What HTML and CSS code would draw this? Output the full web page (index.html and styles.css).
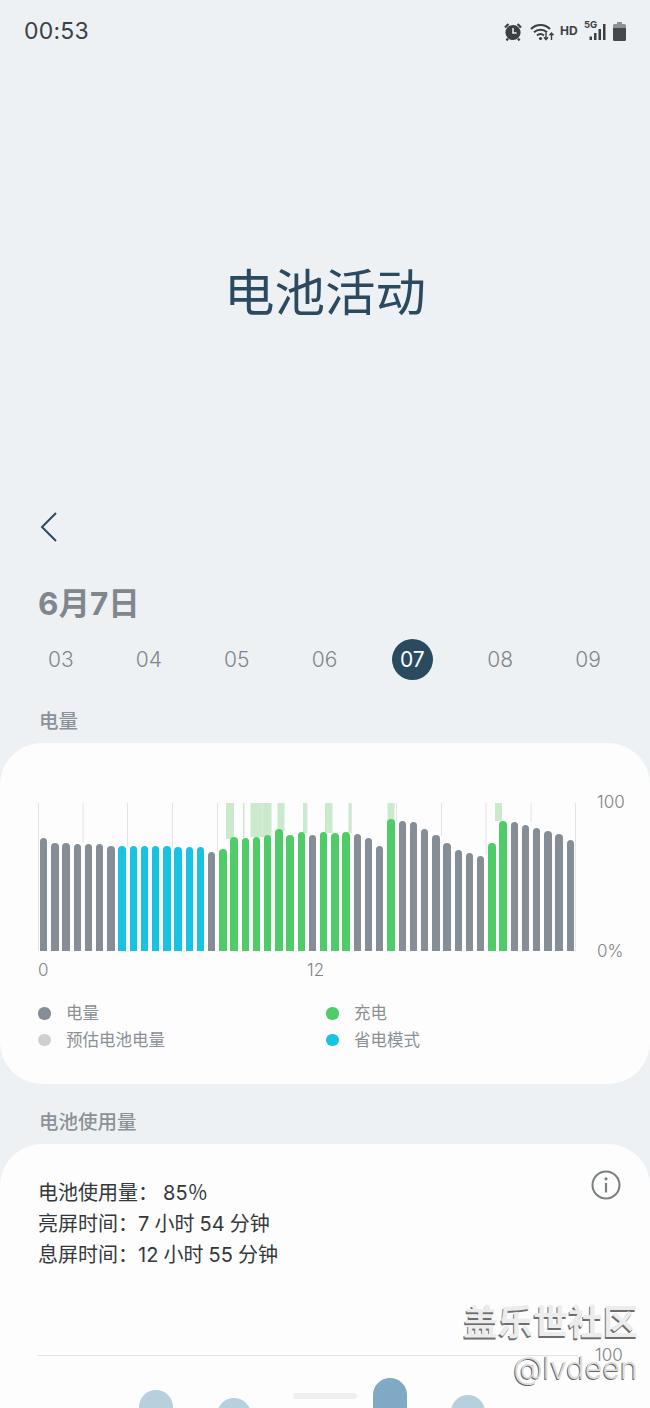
FILE: index.html
```html
<!DOCTYPE html>
<html lang="zh">
<head>
<meta charset="utf-8">
<title>电池活动</title>
<link rel="stylesheet" href="styles.css">
</head>
<body>
<div class="screen">
  <header class="status">
    <span class="time">00:53</span>
    <div class="status-icons">
      <svg class="ic-alarm" width="20" height="19" viewBox="0 0 20 19"><circle cx="10" cy="10.500" r="7.600" fill="#3a3f43"/><path d="M10 6v5h3.600" fill="none" stroke="#eef1f4" stroke-width="1.500"/><path d="M2 5.500 5.500 2M18 5.500 14.500 2M5 16.500 3.500 18.500M15 16.500 16.500 18.500" stroke="#3a3f43" stroke-width="2.200" fill="none"/></svg>
      <svg class="ic-wifi" width="24" height="19" viewBox="0 0 24 19"><g fill="none" stroke="#3a3f43" stroke-width="2"><path d="M1 7C6 1.500 15 1.500 20 7"/><path d="M4 10.300c3.600-3.400 9.400-3.400 13 0"/><path d="M7 13.500c2.200-1.800 4.800-1.800 7 0"/></g><circle cx="10.500" cy="16.500" r="1.600" fill="#3a3f43"/><path d="M16 10.500v7M14 15.300l2 2.300 2-2.300M21.500 18v-7M19.500 13.300l2-2.300 2 2.300" fill="none" stroke="#3a3f43" stroke-width="1.400"/></svg>
      <span class="hd">HD</span>
      <div class="net">
        <span class="fiveg">5G</span>
        <svg class="ic-signal" width="17" height="16" viewBox="0 0 17 16"><path d="M0.500 12.500h2.500V16H0.500zM5 9h2.500v7H5zM9.500 5H12v11H9.500zM14 0h2.500v16H14z" fill="#3a3f43"/></svg>
      </div>
      <svg class="ic-battery" width="13" height="19" viewBox="0 0 13 19"><path d="M4 0h5v2h2.500A1.500 1.500 0 0 1 13 3.500V6H0V3.500A1.500 1.500 0 0 1 1.500 2H4z" fill="#8d9195"/><path d="M0 6h13V17.500A1.500 1.500 0 0 1 11.500 19h-10A1.500 1.500 0 0 1 0 17.500z" fill="#44494d"/></svg>
    </div>
  </header>

  <section class="hero"><h1 class="title">电池活动</h1></section>

  <nav class="back">
    <svg width="18" height="30" viewBox="0 0 18 30"><path d="M16 1 2 15l14 14" fill="none" stroke="#2a4a60" stroke-width="2"/></svg>
  </nav>

  <h2 class="date-title">6月7日</h2>
  <div class="dates">
    <span class="date">03</span>
    <span class="date">04</span>
    <span class="date">05</span>
    <span class="date">06</span>
    <span class="date"><b class="date-on">07</b></span>
    <span class="date">08</span>
    <span class="date">09</span>
  </div>

  <h3 class="section first">电量</h3>
  <section class="card level-card">
    <div class="chart">
      <div class="plot">
        <svg class="plot-bg" width="540" height="148" viewBox="38 803 540 148">
          <g class="bands">
            <rect x="226" y="803" width="8" height="36"/>
            <rect x="243" y="803" width="1.500" height="34"/>
            <rect x="250.500" y="803" width="21" height="34"/>
            <rect x="277.500" y="803" width="7" height="28"/>
            <rect x="303" y="803" width="4" height="30"/>
            <rect x="325" y="803" width="7.500" height="30"/>
            <rect x="348.500" y="803" width="3.500" height="30"/>
            <rect x="387.500" y="803" width="7" height="18"/>
            <rect x="495" y="803" width="7" height="18"/>
          </g>
          <g class="grid">
            <path d="M38.500 803V951M83 803V843M127.500 803V846M172.500 803V847M217.500 803V852M262.500 803V835M307 803V835M351.500 803V832M396.500 803V821M441.500 803V836M486 803V855M531 803V822M575.500 803V951"/>
          </g>
        </svg>
        <div class="bars">
          <i class="bar g" style="height:113px"></i><i class="bar g" style="height:108px"></i><i class="bar g" style="height:108px"></i><i class="bar g" style="height:107px"></i>
          <i class="bar g" style="height:107px"></i><i class="bar g" style="height:107px"></i><i class="bar g" style="height:105px"></i><i class="bar b" style="height:105px"></i>
          <i class="bar b" style="height:105px"></i><i class="bar b" style="height:105px"></i><i class="bar b" style="height:105px"></i><i class="bar b" style="height:105px"></i>
          <i class="bar b" style="height:104px"></i><i class="bar b" style="height:104px"></i><i class="bar b" style="height:104px"></i><i class="bar g" style="height:99px"></i>
          <i class="bar c" style="height:102px"></i><i class="bar c" style="height:114px"></i><i class="bar c" style="height:113px"></i><i class="bar c" style="height:114px"></i>
          <i class="bar c" style="height:116px"></i><i class="bar c" style="height:122px"></i><i class="bar c" style="height:116px"></i><i class="bar c" style="height:119px"></i>
          <i class="bar g" style="height:116px"></i><i class="bar c" style="height:119px"></i><i class="bar c" style="height:118px"></i><i class="bar c" style="height:119px"></i>
          <i class="bar g" style="height:117px"></i><i class="bar g" style="height:113px"></i><i class="bar g" style="height:105px"></i><i class="bar c" style="height:132px"></i>
          <i class="bar g" style="height:130px"></i><i class="bar g" style="height:129px"></i><i class="bar g" style="height:122px"></i><i class="bar g" style="height:116px"></i>
          <i class="bar g" style="height:108px"></i><i class="bar g" style="height:101px"></i><i class="bar g" style="height:98px"></i><i class="bar g" style="height:95px"></i>
          <i class="bar c" style="height:108px"></i><i class="bar c" style="height:130px"></i><i class="bar g" style="height:129px"></i><i class="bar g" style="height:126px"></i>
          <i class="bar g" style="height:123px"></i><i class="bar g" style="height:120px"></i><i class="bar g" style="height:117px"></i><i class="bar g" style="height:111px"></i>
        </div>
      </div>
      <div class="y-axis"><span>100</span><span>0%</span></div>
    </div>
    <div class="x-axis"><span class="x-half">0</span><span>12</span></div>
    <ul class="legend">
      <li class="legend-item"><i class="dot g"></i>电量</li>
      <li class="legend-item"><i class="dot c"></i>充电</li>
      <li class="legend-item"><i class="dot e"></i>预估电池电量</li>
      <li class="legend-item"><i class="dot b"></i>省电模式</li>
    </ul>
  </section>

  <h3 class="section second">电池使用量</h3>
  <section class="card usage-card">
    <div class="usage-head">
      <div class="usage-text">
        <p class="usage-line">电池使用量： 85％</p>
        <p class="usage-line">亮屏时间：7 小时 54 分钟</p>
        <p class="usage-line">息屏时间：12 小时 55 分钟</p>
      </div>
      <svg class="info" width="30" height="30" viewBox="0 0 30 30"><circle cx="15" cy="15" r="13.500" fill="none" stroke="#7a7f82" stroke-width="2"/><circle cx="15" cy="8.800" r="1.600" fill="#7a7f82"/><path d="M15 13v9.500" stroke="#7a7f82" stroke-width="2.200"/></svg>
    </div>
    <div class="usage-chart">
      <div class="usage-axis"><span class="usage-rule"></span><span class="usage-max">100</span></div>
      <div class="usage-bars">
        <i class="ubar" style="height:67px"></i>
        <i class="ubar" style="height:59px"></i>
        <i class="ubar" style="height:0"></i>
        <i class="ubar peak" style="height:79px"></i>
        <i class="ubar" style="height:62px"></i>
      </div>
    </div>
  </section>

  <div class="pill"></div>
  <div class="watermark">
    <div class="wm-cn">盖乐世社区</div>
    <div class="wm-en">@lvdeen</div>
  </div>
</div>
</body>
</html>
```
FILE: styles.css
```css
* { box-sizing: border-box; }
html, body { margin: 0; padding: 0; }
body {
  background: #eef1f4;
  font-family: Inter, "Noto Sans CJK SC", sans-serif;
}
h1, h2, h3, p, ul { margin: 0; padding: 0; }
i { display: block; }

.screen {
  position: relative;
  width: 650px;
  height: 1408px;
  overflow: hidden;
  background: #eef1f4;
}

/* status bar */
.status {
  height: 62px;
  padding: 0 24px 0 24px;
  display: flex;
  align-items: center;
  justify-content: space-between;
}
.time { font-size: 23px; line-height: 28px; color: #3c4146; letter-spacing: .2px; }
.status-icons { display: flex; align-items: center; }
.ic-alarm { margin-right: 7px; }
.ic-wifi { margin-right: 6px; }
.hd { font-size: 12px; line-height: 14px; font-weight: 700; color: #3c4146; width: 24px; }
.net { width: 24px; height: 20px; position: relative; margin-right: 5px; }
.fiveg { position: absolute; left: 0; top: -1px; font-size: 9.500px; line-height: 10px; font-weight: 700; color: #3c4146; }
.ic-signal { position: absolute; left: 5px; top: 3px; }

/* hero */
.hero { height: 450px; padding-top: 200px; text-align: center; }
.title {
  font-size: 50.500px;
  line-height: 62px;
  font-weight: 400;
  color: #2b4a60;
}

.back { height: 30px; padding-left: 40px; }
.back svg { display: block; }

.date-title {
  margin-top: 40px;
  padding-left: 38px;
  font-size: 31.500px;
  line-height: 44px;
  font-weight: 700;
  color: #7f878c;
}
.dates {
  margin-top: 12px;
  padding: 0 18px 0 17px;
  display: flex;
}
.date {
  flex: 1;
  height: 42px;
  display: flex;
  align-items: center;
  justify-content: center;
  font-size: 21px;
  font-weight: 300;
  color: #80878c;
}
.date-on {
  width: 41px;
  height: 41px;
  border-radius: 50%;
  background: #2a4a60;
  color: #fff;
  font-weight: 400;
  display: flex;
  align-items: center;
  justify-content: center;
}

.section {
  padding-left: 39px;
  font-size: 19.500px;
  line-height: 28px;
  font-weight: 500;
  color: #8b9298;
}
.section.first { margin-top: 27px; }
.section.second { margin-top: 24px; }

.card {
  background: #fdfdfd;
  border-radius: 42px;
}
.level-card {
  margin-top: 8px;
  height: 341px;
  padding: 60px 0 0 38px;
}

.chart { display: flex; }
.plot { position: relative; width: 538px; height: 148px; }
.plot-bg { position: absolute; left: 0; top: 0; }
.bands rect { fill: #c9ebcc; }
.grid path { stroke: #e3e4e5; stroke-width: 1; fill: none; }
.bars {
  position: relative;
  height: 148px;
  padding: 0 2px;
  display: flex;
  align-items: flex-end;
  justify-content: space-between;
}
.bar { width: 7.400px; border-radius: 4px 4px 0 0; }
.g { background: #858e96; }
.b { background: #17c3e0; }
.c { background: #4fcb68; }
.e { background: #cfcfcf; }

.y-axis {
  margin: -12px 0 -11px 21px;
  display: flex;
  flex-direction: column;
  justify-content: space-between;
  font-size: 17px;
  line-height: 22px;
  font-weight: 300;
  color: #7d8184;
}
.x-axis {
  margin-top: 8px;
  display: flex;
  font-size: 17px;
  line-height: 22px;
  font-weight: 300;
  color: #7d8184;
}
.x-half { width: 269px; }

.legend {
  list-style: none;
  margin-top: 19px;
  display: grid;
  grid-template-columns: 288px 1fr;
  grid-auto-rows: 26.500px;
}
.legend-item {
  display: flex;
  align-items: center;
  font-size: 16.500px;
  line-height: 24px;
  color: #8a9095;
}
.dot {
  width: 12.500px;
  height: 12.500px;
  border-radius: 50%;
  margin-right: 15.500px;
}

/* usage */
.usage-card {
  margin-top: 8px;
  height: 400px;
  padding: 34px 0 0 0;
}
.usage-head {
  padding: 0 29px 0 38px;
  display: flex;
  justify-content: space-between;
  align-items: flex-start;
}
.usage-line {
  font-size: 20px;
  line-height: 31px;
  word-spacing: -.5px;
  color: #34383b;
}
.info { margin-top: -8px; }
.usage-chart { margin-top: 83.500px; }
.usage-axis {
  position: relative;
  height: 2px;
  padding: 0 72px 0 38px;
}
.usage-rule { display: block; height: 1.500px; background: #e2e3e4; }
.usage-max {
  position: absolute;
  left: 595px;
  top: -10px;
  font-size: 17px;
  line-height: 20px;
  font-weight: 300;
  color: #7d8184;
}
.usage-bars {
  height: 100px;
  padding-left: 139px;
  display: flex;
  align-items: flex-end;
  gap: 44px;
}
.ubar {
  width: 34px;
  background: #b6d0de;
  border-radius: 17px 17px 0 0;
}
.ubar.peak { background: #7fa9c4; }

/* overlays */
.pill {
  position: absolute;
  left: 293px;
  top: 1393px;
  width: 64px;
  height: 6px;
  border-radius: 3px;
  background: #efefef;
}
.watermark {
  position: absolute;
  right: 12px;
  top: 1300px;
  text-align: right;
  color: #ececec;
}
.wm-cn {
  font-size: 35px;
  line-height: 44px;
  font-weight: 700;
  text-shadow: -1px 1.500px 0 #6e6e6e;
}
.wm-en {
  font-size: 30.500px;
  line-height: 44px;
  margin-top: 2px;
  font-weight: 300;
  color: #dcdcdc;
  text-shadow: -1px 1px 0 #666;
}
```
